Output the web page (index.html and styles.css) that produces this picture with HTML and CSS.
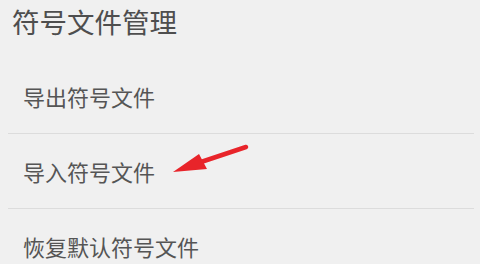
FILE: index.html
```html
<!DOCTYPE html>
<html lang="zh">
<head>
<meta charset="utf-8">
<link rel="stylesheet" href="styles.css">
</head>
<body>
<div class="page">
  <h1 class="title">符号文件管理</h1>
  <ul class="list">
    <li class="item">导出符号文件</li>
    <li class="item">导入符号文件</li>
    <li class="item">恢复默认符号文件</li>
  </ul>
  <svg class="arrow" width="480" height="264" viewBox="0 0 480 264">
    <line x1="246" y1="147" x2="195" y2="164" stroke="#e8242a" stroke-width="4.5" stroke-linecap="round"/>
    <polygon points="173,172 199,154 207,169" fill="#e8242a"/>
  </svg>
</div>
</body>
</html>
```
FILE: styles.css
```css
html, body {
  margin: 0;
  padding: 0;
  background: #f0f0f0;
}
.page {
  position: relative;
  width: 480px;
  height: 264px;
  overflow: hidden;
  font-family: "Noto Sans CJK SC", "Noto Sans", sans-serif;
  color: #555555;
}
.title {
  margin: 0;
  height: 59px;
  padding: 0 12px;
  font-size: 27.5px;
  font-weight: 400;
  line-height: 43px;
  color: #4e4e4e;
}
.list {
  list-style: none;
  margin: 0 6px 0 8px;
  padding: 0;
}
.item {
  height: 74px;
  line-height: 74px;
  padding-left: 15px;
  font-size: 22px;
  border-bottom: 1px solid #dcdcdc;
}
.item:last-child {
  border-bottom: none;
}
.arrow {
  position: absolute;
  left: 0;
  top: 0;
}
```
